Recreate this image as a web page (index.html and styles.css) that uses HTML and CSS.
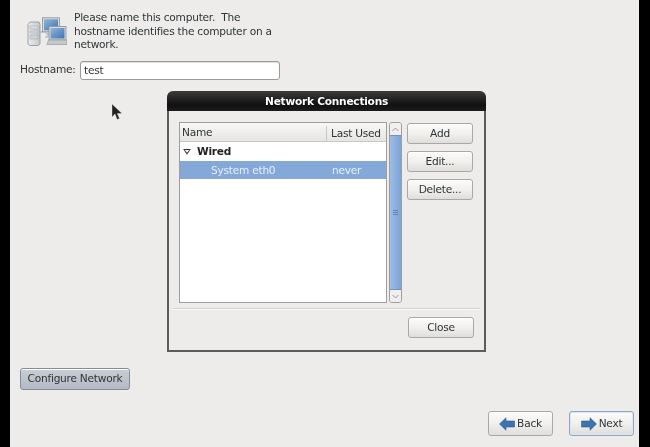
FILE: index.html
```html
<!DOCTYPE html>
<html lang="en">
<head>
<meta charset="utf-8">
<title>Network Connections</title>
<link rel="stylesheet" href="styles.css">
</head>
<body>
<div class="screen">
  <main class="installer">
    <section class="intro">
      <svg class="host-icon" width="40" height="30" viewBox="0 0 40 30" aria-hidden="true">
        <defs>
          <linearGradient id="scr" x1="0" y1="0" x2="1" y2="1"><stop offset="0" stop-color="#8fb6dc"/><stop offset="1" stop-color="#3f75ad"/></linearGradient>
          <linearGradient id="tower" x1="0" y1="0" x2="1" y2="0"><stop offset="0" stop-color="#eceef0"/><stop offset="1" stop-color="#c4c8cc"/></linearGradient>
        </defs>
        <path d="M1 7.500 3 5h9l1 2.500V27l-2 1.500H3L1 27z" fill="url(#tower)" stroke="#8b9096" stroke-width=".8"/>
        <rect x="3" y="9" width="8" height="3" fill="#dcdfe2" stroke="#9aa0a6" stroke-width=".5"/>
        <rect x="3" y="14" width="8" height="2" fill="#dcdfe2" stroke="#9aa0a6" stroke-width=".5"/>
        <rect x="3" y="18" width="8" height="4" fill="#d0d4d8" stroke="#9aa0a6" stroke-width=".5"/>
        <path d="M13 15h8v5h-3" fill="none" stroke="#a4a9ae" stroke-width="1"/>
        <rect x="15.500" y=".8" width="17" height="14" fill="#d8dadc" stroke="#8b9096" stroke-width=".8"/>
        <rect x="17" y="2.300" width="14" height="11" fill="url(#scr)"/>
        <rect x="19" y="14.800" width="10" height="3" fill="#bfc3c7"/>
        <rect x="22" y="9.500" width="17" height="13.500" fill="#d8dadc" stroke="#8b9096" stroke-width=".8"/>
        <rect x="23.500" y="11" width="14" height="10.500" fill="url(#scr)"/>
        <path d="M21.500 23h18l.5 4.500H20z" fill="#c6c9cc" stroke="#8b9096" stroke-width=".6"/>
      </svg>
      <p class="intro-text">Please name this computer.&nbsp; The<br>hostname identifies the computer on a<br>network.</p>
    </section>
    <section class="hostname">
      <label class="hostname-label" for="hn">Hostname:</label>
      <input class="hostname-input" id="hn" type="text" value="test">
    </section>
    <div class="spacer"></div>
    <button class="btn configure" type="button">Configure Network</button>
    <nav class="wizard">
      <button class="btn nav-btn" type="button">
        <svg width="16" height="14" viewBox="0 0 16 14" aria-hidden="true"><path d="M.5 7 7 .8v3.200h8.500v6H7v3.200z" fill="#3b74ae" stroke="#2c5d92" stroke-width=".6"/></svg>
        <span>Back</span>
      </button>
      <button class="btn nav-btn focused" type="button">
        <svg width="16" height="14" viewBox="0 0 16 14" aria-hidden="true"><path d="M15.500 7 9 .8v3.200H.5v6H9v3.200z" fill="#3b74ae" stroke="#2c5d92" stroke-width=".6"/></svg>
        <span>Next</span>
      </button>
    </nav>
  </main>
</div>

<svg class="cursor" width="11" height="17" viewBox="0 0 11 17" aria-hidden="true"><path d="M0 0v13l3-3 2.200 5.500 2.300-1L5.300 9.500H10z" fill="#222" stroke="#ddd" stroke-width=".4"/></svg>

<section class="dialog" role="dialog" aria-label="Network Connections">
  <header class="titlebar">Network Connections</header>
  <div class="dialog-body">
    <div class="dialog-top">
      <div class="list">
        <div class="list-head">
          <span class="col-name">Name</span>
          <span class="col-used">Last Used</span>
        </div>
        <div class="row group"><i class="expander"></i>Wired</div>
        <div class="row selected"><span class="col-name indent">System eth0</span><span class="col-used">never</span></div>
      </div>
      <div class="scrollbar">
        <span class="step"><svg width="7" height="5" viewBox="0 0 7 5" aria-hidden="true"><path d="M.5 4 3.500 1l3 3" fill="none" stroke="#9a9a9a"/></svg></span>
        <span class="thumb"><i></i><i></i><i></i></span>
        <span class="step"><svg width="7" height="5" viewBox="0 0 7 5" aria-hidden="true"><path d="M.5 1l3 3 3-3" fill="none" stroke="#9a9a9a"/></svg></span>
      </div>
      <div class="actions">
        <button class="btn action" type="button">Add</button>
        <button class="btn action" type="button">Edit...</button>
        <button class="btn action" type="button">Delete...</button>
      </div>
    </div>
    <hr class="separator">
    <div class="dialog-bottom"><button class="btn action" type="button">Close</button></div>
  </div>
</section>
</body>
</html>
```
FILE: styles.css
```css
* { box-sizing: border-box; }
html, body { margin: 0; height: 100%; }
body {
  background: #000;
  overflow: hidden;
  font: 10.600px/13.500px "DejaVu Sans", sans-serif;
  letter-spacing: -.24px;
  color: #2e3436;
  filter: blur(.35px);
}
.screen { height: 447px; padding: 0 11px 0 10px; }
.installer {
  height: 100%;
  background: #edecea;
  padding: 11px 5px 11px 10px;
  display: flex;
  flex-direction: column;
}
.intro { display: flex; align-items: flex-start; gap: 7px; padding: 0 0 0 7px; }
.host-icon { margin-top: 6px; flex: none; }
.intro-text { margin: 0; }
.hostname { display: flex; align-items: center; gap: 4px; margin-top: 9px; }
.hostname-label { width: 56px; white-space: nowrap; }
.hostname-input {
  width: 200px;
  height: 19px;
  border: 1px solid #9b9a96;
  border-radius: 3px;
  background: #fff;
  padding: 0 3px;
  font: inherit;
  letter-spacing: inherit;
  color: inherit;
  box-shadow: inset 0 1px 1px #ddd;
}
.spacer { flex: 1; }
.btn {
  font: inherit;
  letter-spacing: inherit;
  color: #2e3436;
  border: 1px solid #a9a8a4;
  border-radius: 3px;
  background: linear-gradient(#fbfbfa, #f1f0ee 50%, #dfdedb);
  padding: 0;
  box-shadow: 0 1px 0 #fff inset;
  white-space: nowrap;
}
.configure {
  align-self: flex-start;
  width: 110px;
  height: 22px;
  border-color: #7d8ea2;
  background: linear-gradient(#c9ced4, #b4bac2);
}
.wizard { display: flex; justify-content: flex-end; gap: 16px; margin-top: 21px; }
.nav-btn {
  width: 65px;
  height: 25px;
  display: flex;
  align-items: center;
  justify-content: center;
  gap: 2px;
}
.focused { border-color: #8fa6c4; box-shadow: inset 0 0 0 1px #dfe7f0; }

.cursor { position: absolute; left: 112px; top: 104px; }

.dialog {
  position: absolute;
  left: 167px;
  top: 91px;
  width: 319px;
  height: 261px;
  display: flex;
  flex-direction: column;
}
.titlebar {
  height: 20px;
  flex: none;
  border-radius: 6px 6px 0 0;
  background: linear-gradient(#3b3b3b, #111 70%, #1c1c1c);
  color: #fff;
  font-weight: bold;
  text-align: center;
  line-height: 21px;
  text-shadow: 0 0 1px #000;
}
.dialog-body {
  flex: 1;
  background: #edecea;
  border-style: solid;
  border-width: 0 2px 2px 2px;
  border-color: #5c5c5c;
  padding: 11px 4px 0 4px;
  display: flex;
  flex-direction: column;
}
.dialog-top { display: flex; height: 181px; padding-left: 6px; }
.list { width: 208px; border: 1px solid #9f9e9a; background: #fff; flex: none; }
.list-head {
  display: flex;
  height: 19px;
  align-items: center;
  background: linear-gradient(#f7f7f6, #e6e5e2);
  border-bottom: 1px solid #c9c8c4;
  padding-top: 2px;
}
.col-name { flex: 1; padding-left: 2px; white-space: nowrap; }
.col-used { width: 60px; flex: none; padding-left: 4px; white-space: nowrap; }
.list-head .col-used { border-left: 1px solid #c9c8c4; line-height: 15px; }
.row { height: 18.500px; display: flex; align-items: center; padding-top: 1px; }
.group { font-weight: bold; color: #222; padding-left: 3px; }
.expander {
  width: 8px;
  height: 6px;
  margin-right: 6px;
  clip-path: polygon(0 0, 100% 0, 50% 100%);
  background: #2e3436;
  position: relative;
}
.expander::after {
  content: "";
  position: absolute;
  left: 1.500px;
  top: 1px;
  width: 5px;
  height: 3px;
  clip-path: polygon(0 0, 100% 0, 50% 100%);
  background: #fff;
}
.selected { background: #84a9d8; color: #e6eef8; }
.indent { padding-left: 31px; }
.selected .col-used { width: 56px; padding-left: 2px; }
.scrollbar {
  width: 13px;
  margin-left: 2px;
  flex: none;
  display: flex;
  flex-direction: column;
  border: 1px solid #9f9e9a;
  border-radius: 3px;
  overflow: hidden;
  background: #e6e5e2;
}
.step { height: 12px; flex: none; display: flex; align-items: center; justify-content: center; background: #f0efed; }
.thumb {
  flex: 1;
  display: flex;
  flex-direction: column;
  justify-content: center;
  align-items: center;
  gap: 1px;
  background: linear-gradient(90deg, #9cbde8, #7ba2d6);
  border-top: 1px solid #6f93c2;
  border-bottom: 1px solid #6f93c2;
}
.thumb i { width: 5px; height: 1px; background: #5f83b2; }
.actions { margin-left: 5px; padding-top: 1px; display: flex; flex-direction: column; gap: 7px; }
.action { width: 66px; height: 21px; }
.separator { width: 100%; height: 2px; margin: 5px 0 0; border: 0; border-top: 1px solid #d5d4d0; border-bottom: 1px solid #f9f9f8; }
.dialog-bottom { display: flex; justify-content: flex-end; padding: 7px 6px 0 0; }
```
